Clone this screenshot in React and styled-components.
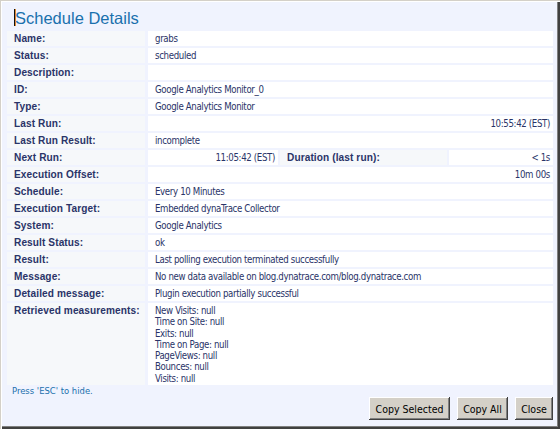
import React from 'react';
import styled, { createGlobalStyle } from 'styled-components';

const GlobalStyle = createGlobalStyle`
  html, body {
    margin: 0;
    padding: 0;
    background: #f0f3fe;
  }
`;

const Window = styled.div`
  width: 560px;
  height: 429px;
  box-sizing: border-box;
  background: #f0f3fe;
  box-shadow: inset 1px 1px #d4d0c8, inset 2px 2px #ffffff,
    inset -1px -1px #404040, inset -2px -2px #404040, inset -3px -3px #808080;
  padding: 0 7px;
  display: flex;
  flex-direction: column;
  font-family: "DejaVu Sans Condensed", "Liberation Sans", Arial, sans-serif;
  color: #2a3468;
`;

const Title = styled.h1`
  margin: 0;
  height: 31px;
  box-sizing: border-box;
  padding: 9px 0 0 7px;
  font-family: "Liberation Sans", Arial, sans-serif;
  font-weight: normal;
  font-size: 16.5px;
  line-height: 18px;
  color: #1a70ad;
  display: flex;
  align-items: flex-start;
`;

const Caret = styled.span`
  display: inline-block;
  width: 1px;
  height: 17px;
  background: #111;
  box-shadow: 1px 0 #e08a30;
`;

const Table = styled.div`
  display: flex;
  flex-direction: column;
  gap: 2px;
`;

const Row = styled.div`
  display: grid;
  grid-template-columns: ${p => (p.$split ? '138px 131px 167px 1fr' : '138px 1fr')};
  column-gap: ${p => (p.$split ? '2px' : '3px')};
  min-height: 15px;
  & > *:nth-child(2) { margin-left: ${p => (p.$split ? '1px' : '0')}; }
`;

const Label = styled.div`
  background: #f6f8fa;
  font-family: "Liberation Sans", Arial, sans-serif;
  font-weight: bold;
  font-size: 10.1px;
  line-height: 15px;
  padding: 0 0 0 7px;
  white-space: nowrap;
  letter-spacing: 0.1px;
`;

const Value = styled.div`
  background: #ffffff;
  font-size: 9.6px;
  letter-spacing: -0.35px;
  line-height: ${p => (p.$multi ? '11.3px' : '15px')};
  padding: ${p => (p.$multi ? '2px 3px 1px 7px' : '0 3px 0 7px')};
  text-align: ${p => (p.$right ? 'right' : 'left')};
  white-space: nowrap;
`;

const Footer = styled.div`
  display: flex;
  flex-direction: column;
  flex: 1;
`;

const Hint = styled.div`
  font-size: 9.4px;
  color: #1a70ad;
  padding: 1px 0 0 5px;
  line-height: 10px;
`;

const Buttons = styled.div`
  display: flex;
  justify-content: flex-end;
  gap: 7px;
  margin-top: 1px;
`;

const Button = styled.button`
  width: ${p => p.$w}px;
  height: 23px;
  padding: 0;
  border: none;
  background: #d4d0c8;
  font-family: "DejaVu Sans Condensed", "Liberation Sans", Arial, sans-serif;
  font-size: 10.5px;
  color: #000;
  box-shadow: inset -1px -1px #404040, inset 1px 1px #ffffff,
    inset -2px -2px #808080, inset 2px 2px #d4d0c8;
`;

const rows = [
  ['Name:', 'grabs'],
  ['Status:', 'scheduled'],
  ['Description:', ''],
  ['ID:', 'Google Analytics Monitor_0'],
  ['Type:', 'Google Analytics Monitor'],
  ['Last Run:', '10:55:42 (EST)', true],
  ['Last Run Result:', 'incomplete'],
];

const rows2 = [
  ['Execution Offset:', '10m 00s', true],
  ['Schedule:', 'Every 10 Minutes'],
  ['Execution Target:', 'Embedded dynaTrace Collector'],
  ['System:', 'Google Analytics'],
  ['Result Status:', 'ok'],
  ['Result:', 'Last polling execution terminated successfully'],
  ['Message:', 'No new data available on blog.dynatrace.com/blog.dynatrace.com'],
  ['Detailed message:', 'Plugin execution partially successful'],
];

const measurements = [
  'New Visits: null',
  'Time on Site: null',
  'Exits: null',
  'Time on Page: null',
  'PageViews: null',
  'Bounces: null',
  'Visits: null',
];

export default function App() {
  return (
    <>
      <GlobalStyle />
      <Window>
        <Title><Caret />Schedule Details</Title>
        <Table>
          {rows.map(([l, v, r]) => (
            <Row key={l}>
              <Label>{l}</Label>
              <Value $right={r}>{v}</Value>
            </Row>
          ))}
          <Row $split>
            <Label>Next Run:</Label>
            <Value $right>11:05:42 (EST)</Value>
            <Label>Duration (last run):</Label>
            <Value $right>&lt; 1s</Value>
          </Row>
          {rows2.map(([l, v, r]) => (
            <Row key={l}>
              <Label>{l}</Label>
              <Value $right={r}>{v}</Value>
            </Row>
          ))}
          <Row>
            <Label>Retrieved measurements:</Label>
            <Value $multi>
              {measurements.map(m => <div key={m}>{m}</div>)}
            </Value>
          </Row>
        </Table>
        <Footer>
          <Hint>Press 'ESC' to hide.</Hint>
          <Buttons>
            <Button $w={81}>Copy Selected</Button>
            <Button $w={51}>Copy All</Button>
            <Button $w={38}>Close</Button>
          </Buttons>
        </Footer>
      </Window>
    </>
  );
}
